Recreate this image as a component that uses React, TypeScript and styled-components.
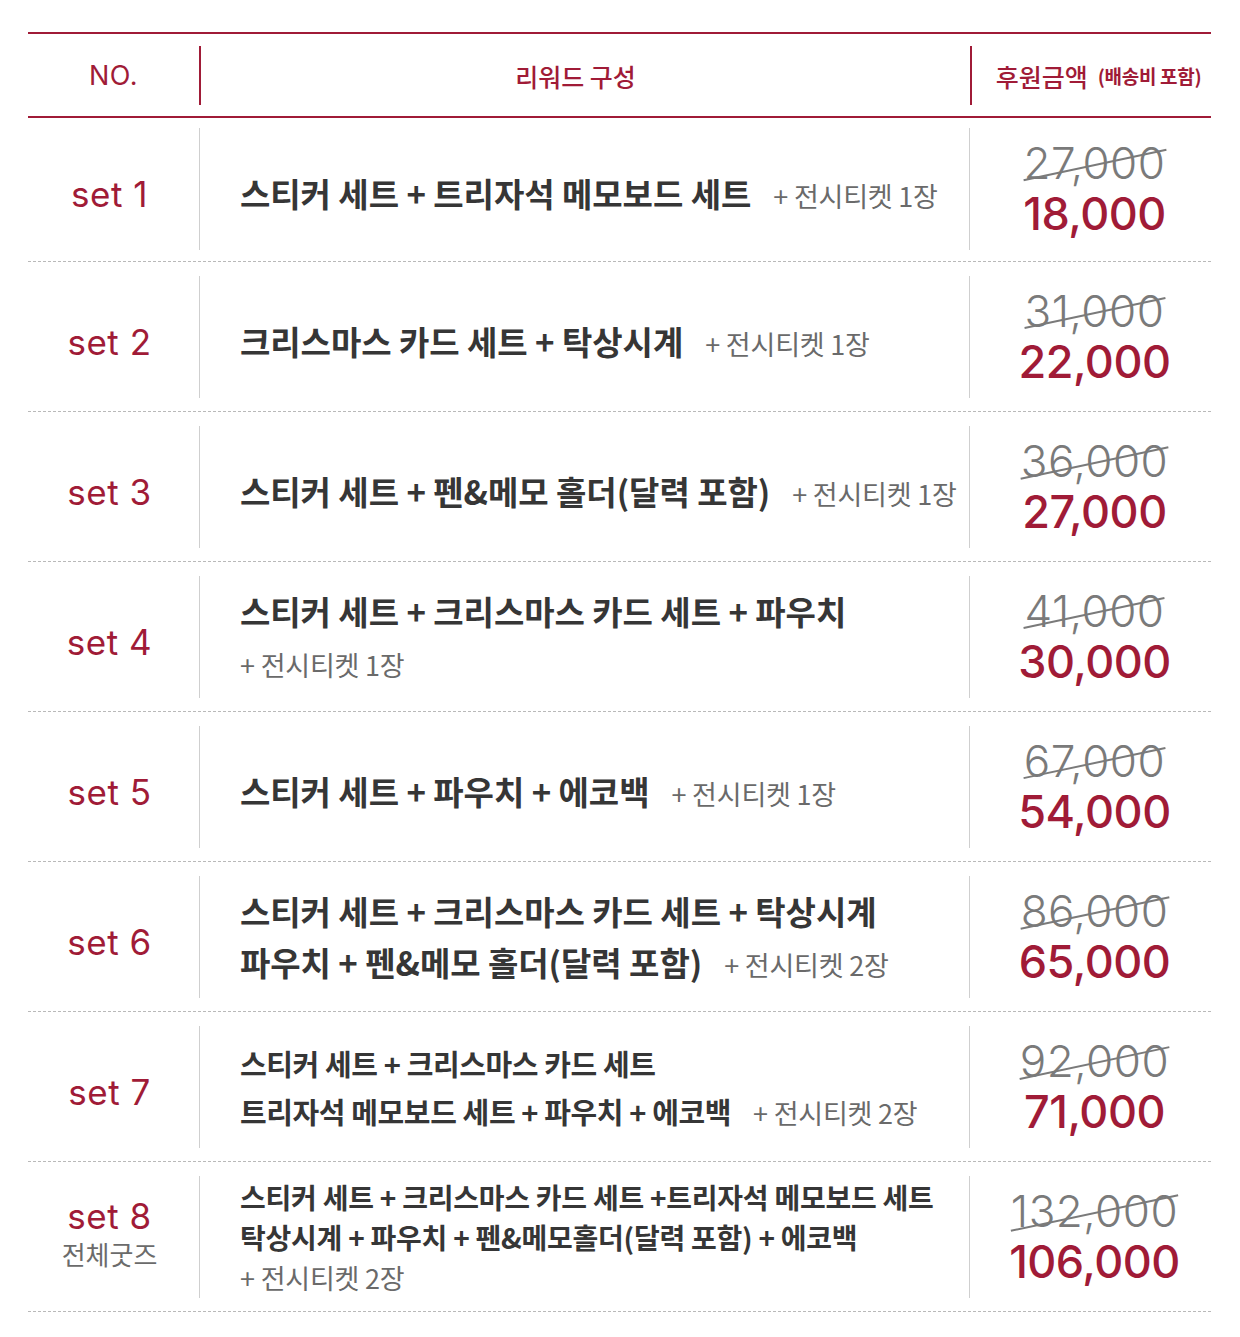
import styled, { createGlobalStyle } from 'styled-components';

const RED = '#a01b37';

const GlobalStyle = createGlobalStyle`
  body {
    margin: 0;
    background: #fff;
    font-family: 'Noto Sans CJK KR', 'Noto Sans', sans-serif;
  }
`;

type Size = 'lg' | 'md' | 'sm';

interface RewardSet {
  no: number;
  sub?: string;
  lines: string[];
  ticket: string;
  ticketOwnLine?: boolean; // 전시티켓을 다음 줄로
  size: Size;
  oldPrice: string;
  price: string;
}

const sets: RewardSet[] = [
  { no: 1, lines: ['스티커 세트 + 트리자석 메모보드 세트'], ticket: '+ 전시티켓 1장', size: 'lg', oldPrice: '27,000', price: '18,000' },
  { no: 2, lines: ['크리스마스 카드 세트 + 탁상시계'], ticket: '+ 전시티켓 1장', size: 'lg', oldPrice: '31,000', price: '22,000' },
  { no: 3, lines: ['스티커 세트 + 펜&메모 홀더(달력 포함)'], ticket: '+ 전시티켓 1장', size: 'lg', oldPrice: '36,000', price: '27,000' },
  { no: 4, lines: ['스티커 세트 + 크리스마스 카드 세트 + 파우치'], ticket: '+ 전시티켓 1장', ticketOwnLine: true, size: 'lg', oldPrice: '41,000', price: '30,000' },
  { no: 5, lines: ['스티커 세트 + 파우치 + 에코백'], ticket: '+ 전시티켓 1장', size: 'lg', oldPrice: '67,000', price: '54,000' },
  { no: 6, lines: ['스티커 세트 + 크리스마스 카드 세트 + 탁상시계', '파우치 + 펜&메모 홀더(달력 포함)'], ticket: '+ 전시티켓 2장', size: 'lg', oldPrice: '86,000', price: '65,000' },
  { no: 7, lines: ['스티커 세트 + 크리스마스 카드 세트', '트리자석 메모보드 세트 + 파우치 + 에코백'], ticket: '+ 전시티켓 2장', size: 'md', oldPrice: '92,000', price: '71,000' },
  { no: 8, sub: '전체굿즈', lines: ['스티커 세트 + 크리스마스 카드 세트 +트리자석 메모보드 세트', '탁상시계 + 파우치 + 펜&메모홀더(달력 포함) + 에코백'], ticket: '+ 전시티켓 2장', ticketOwnLine: true, size: 'sm', oldPrice: '132,000', price: '106,000' },
];

const fontSizes: Record<Size, number> = { lg: 33, md: 29, sm: 28 };
const lineHeights: Record<Size, number> = { lg: 51, md: 48, sm: 40 };
const spacings: Record<Size, number> = { lg: -0.05, md: -0.4, sm: -0.25 };

const Page = styled.div`
  padding: 32px 29px 30px 28px;
`;

const Grid = styled.div`
  display: grid;
  grid-template-columns: 171px 771px 1fr;
`;

const HeaderRow = styled(Grid)`
  border-top: 2px solid ${RED};
  border-bottom: 2px solid ${RED};
  padding: 12px 0 11px;
`;

const HeaderCell = styled.div<{ $divided?: boolean; $shift?: number }>`
  display: flex;
  align-items: center;
  justify-content: center;
  height: 59px;
  color: ${RED};
  padding-left: ${(p) => Math.max(p.$shift ?? 0, 0)}px;
  padding-right: ${(p) => Math.max(-(p.$shift ?? 0), 0)}px;
  border-left: ${(p) => (p.$divided ? `2px solid ${RED}` : 'none')};
`;

const NoLabel = styled.span`
  font-family: Inter, 'Noto Sans', sans-serif;
  font-size: 27px;
  font-weight: 400;
  letter-spacing: 0.5px;
`;

const HeadLabel = styled.span`
  font-size: 25px;
  font-weight: 500;
  letter-spacing: 0;
`;

const HeadNote = styled.span`
  font-size: 19px;
  font-weight: 700;
  letter-spacing: -0.3px;
  margin-left: 10px;
`;

const Row = styled(Grid)<{ $first?: boolean }>`
  border-bottom: 1px dashed #b9b9b9;
  padding: ${(p) => (p.$first ? '10px 0 11px' : '14px 0 13px')};
`;

const NoCell = styled.div<{ $hasSub?: boolean }>`
  display: flex;
  flex-direction: column;
  align-items: center;
  justify-content: center;
  min-height: 122px;
  padding: ${(p) => (p.$hasSub ? '0 8px 6px 0' : '10px 8px 0 0')};
  box-sizing: border-box;
`;

const SetName = styled.div`
  font-family: Inter, 'Noto Sans', sans-serif;
  font-size: 35px;
  font-weight: 400;
  color: ${RED};
  line-height: 40px;
  letter-spacing: 0.5px;
`;

const SetSub = styled.div`
  font-size: 26px;
  color: #6b6b6b;
  letter-spacing: 0;
  line-height: 36px;
`;

const RewardCell = styled.div<{ $offset: number }>`
  display: flex;
  flex-direction: column;
  justify-content: center;
  padding: ${(p) => p.$offset}px 0 0 40px;
  border-left: 1px solid #cfcfcf;
  border-right: 1px solid #cfcfcf;
`;

const Line = styled.div<{ $size: Size }>`
  font-size: ${(p) => fontSizes[p.$size]}px;
  line-height: ${(p) => lineHeights[p.$size]}px;
  font-weight: 700;
  color: #363636;
  letter-spacing: ${(p) => spacings[p.$size]}px;
  white-space: nowrap;
`;

const Ticket = styled.span<{ $inline?: boolean }>`
  font-size: 27px;
  font-weight: 400;
  color: #6a6a6a;
  letter-spacing: -0.2px;
  margin-left: ${(p) => (p.$inline ? 22 : 0)}px;
`;

const PriceCell = styled.div`
  display: flex;
  flex-direction: column;
  align-items: center;
  justify-content: center;
  padding-left: 8px;
`;

const OldPrice = styled.span`
  position: relative;
  font-family: Inter, 'Noto Sans', sans-serif;
  font-size: 44px;
  font-weight: 300;
  color: #7a7a7a;
  line-height: 50px;
  letter-spacing: 0.5px;

  &::after {
    content: '';
    position: absolute;
    left: -2px;
    right: -2px;
    top: 52%;
    height: 2px;
    background: #7a7a7a;
    transform: rotate(-12deg);
  }
`;

const NewPrice = styled.span`
  font-family: Inter, 'Noto Sans', sans-serif;
  font-size: 45px;
  font-weight: 500;
  color: ${RED};
  line-height: 52px;
  letter-spacing: -0.5px;
`;

const SetRow = ({ item, first }: { item: RewardSet; first: boolean }) => {
  const last = item.lines.length - 1;
  const lineCount = item.lines.length + (item.ticketOwnLine ? 1 : 0);
  return (
    <Row $first={first}>
      <NoCell $hasSub={!!item.sub}>
        <SetName>set {item.no}</SetName>
        {item.sub && <SetSub>{item.sub}</SetSub>}
      </NoCell>
      <RewardCell $offset={lineCount === 1 ? 10 : lineCount === 3 ? 0 : 2}>
        {item.lines.map((text, i) => (
          <Line key={i} $size={item.size}>
            {text}
            {i === last && !item.ticketOwnLine && <Ticket $inline>{item.ticket}</Ticket>}
          </Line>
        ))}
        {item.ticketOwnLine && (
          <Line $size={item.size}>
            <Ticket>{item.ticket}</Ticket>
          </Line>
        )}
      </RewardCell>
      <PriceCell>
        <OldPrice>{item.oldPrice}</OldPrice>
        <NewPrice>{item.price}</NewPrice>
      </PriceCell>
    </Row>
  );
};

export default function App() {
  return (
    <Page>
      <GlobalStyle />
      <HeaderRow>
        <HeaderCell>
          <NoLabel>NO.</NoLabel>
        </HeaderCell>
        <HeaderCell $divided $shift={-20}>
          <HeadLabel>리워드 구성</HeadLabel>
        </HeaderCell>
        <HeaderCell $divided $shift={14}>
          <HeadLabel>후원금액</HeadLabel>
          <HeadNote>(배송비 포함)</HeadNote>
        </HeaderCell>
      </HeaderRow>
      {sets.map((item, i) => (
        <SetRow key={item.no} item={item} first={i === 0} />
      ))}
    </Page>
  );
}
